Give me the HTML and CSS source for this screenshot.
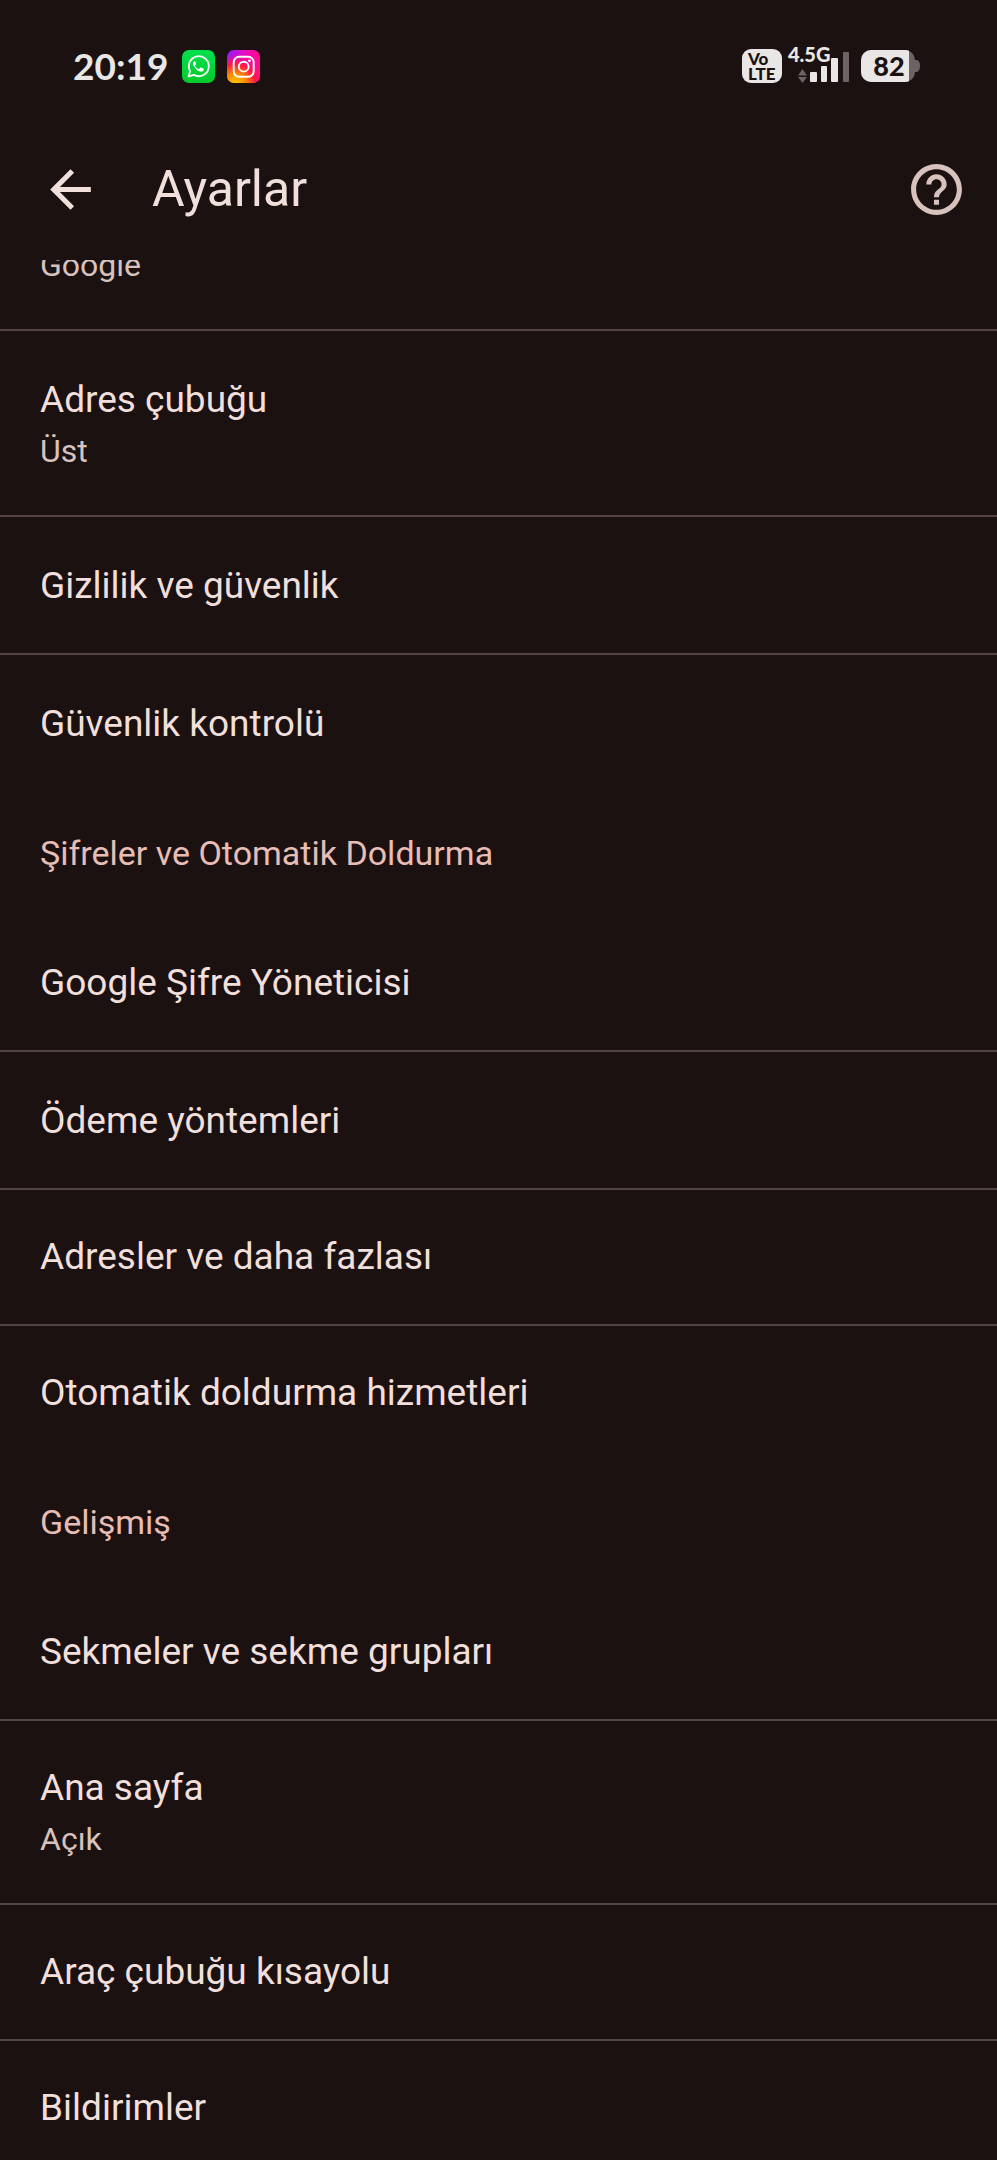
FILE: index.html
```html
<!DOCTYPE html>
<html lang="tr">
<head>
    <meta charset="utf-8">
    <meta name="viewport" content="width=device-width, initial-scale=1">
    <title>Ayarlar</title>
    <link rel="stylesheet" href="styles.css">
</head>
<body>
    <div class="status-bar">
        <span class="clock">20:19</span>
        <svg class="app-icon" viewBox="0 0 33 33" aria-hidden="true">
            <defs>
                <linearGradient id="wa" x1="0" y1="0" x2="0" y2="1">
                    <stop offset="0" stop-color="#02e04c"/>
                    <stop offset="1" stop-color="#02c92c"/>
                </linearGradient>
            </defs>
            <rect width="33" height="33" rx="7" fill="url(#wa)"/>
            <path d="M6.600 26.400l1.500-5.300a10 10 0 1 1 3.800 3.800z" fill="none" stroke="#fff" stroke-width="1.800" stroke-linejoin="round"/>
            <path d="M13.200 11.200c-.5-.2-1.300 0-1.700.7-.8 1.300-.5 3 .9 5 1.900 2.700 4 4.200 6.300 4.700 1.600.3 3.100-.7 3.200-2.200 0-.5-.2-.6-.6-.8l-2.200-1c-.4-.2-.7-.1-.9.2l-.9 1.100c-.2.3-.5.3-.8.1-1.500-.7-2.600-1.700-3.400-3.100-.2-.3-.1-.5.1-.7l.7-.9c.2-.2.2-.5.1-.8l-.8-2z" fill="#fff"/>
        </svg>
        <svg class="app-icon" viewBox="0 0 33 33" aria-hidden="true">
            <defs>
                <linearGradient id="ig" x1="0" y1="0" x2="1" y2="0">
                    <stop offset="0" stop-color="#8a1cff"/>
                    <stop offset=".5" stop-color="#e80cc4"/>
                    <stop offset="1" stop-color="#ff0a8c"/>
                </linearGradient>
                <radialGradient id="ig-warm" cx=".25" cy="1.05" r=".95">
                    <stop offset="0" stop-color="#ffd200"/>
                    <stop offset=".35" stop-color="#ff8a00"/>
                    <stop offset=".65" stop-color="#ff1a40"/>
                    <stop offset="1" stop-color="#ff0a8c" stop-opacity="0"/>
                </radialGradient>
            </defs>
            <rect width="33" height="33" rx="7" fill="url(#ig)"/>
            <rect width="33" height="33" rx="7" fill="url(#ig-warm)"/>
            <rect x="6.700" y="6.700" width="20" height="20" rx="5.500" fill="none" stroke="#fff" stroke-width="1.900"/>
            <circle cx="16.700" cy="16.700" r="4.900" fill="none" stroke="#fff" stroke-width="1.900"/>
            <circle cx="22.500" cy="10.800" r="1.400" fill="#fff"/>
        </svg>

        <div class="indicators">
            <div class="volte">Vo<br>LTE</div>
            <svg class="signal" viewBox="0 0 62 36" role="img" aria-label="4.5G">
                <g fill="#e9e6e6">
                    <text class="signal-label" x="0" y="14">4.5G</text>
                    <rect x="22" y="24" width="7" height="10" rx="1"/>
                    <rect x="33" y="18" width="6" height="16" rx="1"/>
                    <rect x="43" y="10" width="7" height="24" rx="1"/>
                </g>
                <g fill="#6e6265">
                    <rect x="55" y="4" width="6" height="30" rx="1"/>
                    <path d="M14.500 21l4.500 6.500h-9z"/>
                    <path d="M14.500 35l4.500-6h-9z"/>
                </g>
            </svg>
            <svg class="battery" viewBox="0 0 60 33" role="img" aria-label="82">
                <defs>
                    <clipPath id="charge"><rect width="48" height="33"/></clipPath>
                </defs>
                <rect width="54" height="32" rx="10" fill="#6e6265"/>
                <path d="M54 10h2q3 1 3 6t-3 6h-2z" fill="#6e6265"/>
                <rect width="54" height="32" rx="10" fill="#e9e6e6" clip-path="url(#charge)"/>
                <text class="battery-label" x="28" y="26">82</text>
            </svg>
        </div>
    </div>

    <header class="app-bar">
        <button class="icon-button" type="button" aria-label="Geri">
            <svg viewBox="0 0 24 24"><path d="M20 11H7.830l5.590-5.590L12 4l-8 8 8 8 1.410-1.410L7.830 13H20v-2z"/></svg>
        </button>
        <h1>Ayarlar</h1>
        <button class="icon-button help" type="button" aria-label="Yardım">
            <svg viewBox="0 0 24 24"><path d="M11 18h2v-2h-2v2zm1-16C6.480 2 2 6.480 2 12s4.480 10 10 10 10-4.480 10-10S17.520 2 12 2zm0 18c-4.410 0-8-3.590-8-8s3.590-8 8-8 8 3.590 8 8-3.590 8-8 8zm0-14c-2.210 0-4 1.790-4 4h2c0-1.100.9-2 2-2s2 .9 2 2c0 2-3 1.750-3 5h2c0-2.250 3-2.500 3-5 0-2.210-1.790-4-4-4z"/></svg>
        </button>
    </header>

    <main class="settings">
        <ul class="group roomy scrolled">
            <li><a href="#"><span class="summary">Google</span></a></li>
            <li><a href="#">Adres çubuğu<span class="summary">Üst</span></a></li>
            <li><a href="#">Gizlilik ve güvenlik</a></li>
            <li><a href="#">Güvenlik kontrolü</a></li>
        </ul>

        <h2>Şifreler ve Otomatik Doldurma</h2>
        <ul class="group">
            <li><a href="#">Google Şifre Yöneticisi</a></li>
            <li class="roomy"><a href="#">Ödeme yöntemleri</a></li>
            <li><a href="#">Adresler ve daha fazlası</a></li>
            <li><a href="#">Otomatik doldurma hizmetleri</a></li>
        </ul>

        <h2>Gelişmiş</h2>
        <ul class="group">
            <li><a href="#">Sekmeler ve sekme grupları</a></li>
            <li><a href="#">Ana sayfa<span class="summary">Açık</span></a></li>
            <li><a href="#">Araç çubuğu kısayolu</a></li>
            <li><a href="#">Bildirimler</a></li>
        </ul>
    </main>
</body>
</html>
```

FILE: styles.css
```css
* {
    box-sizing: border-box;
}

body {
    display: flex;
    flex-direction: column;
    height: 100vh;
    margin: 0;
    overflow: hidden;
    background: #1a1110;
    color: #f1dfdc;
    font-family: Roboto, "Liberation Sans", sans-serif;
}

/* status bar */

.status-bar {
    display: flex;
    flex-shrink: 0;
    align-items: center;
    gap: 12px;
    height: 120px;
    padding: 12px 76px 0 73px;
    color: #e9e6e6;
}

.clock {
    margin-right: 2px;
    font: 700 37px/40px Lato, sans-serif;
}

.app-icon {
    width: 33px;
    height: 33px;
}

.indicators {
    display: flex;
    align-items: center;
    gap: 6px;
    margin-left: auto;
}

.volte {
    width: 40px;
    height: 34px;
    padding: 2px 6px;
    border-radius: 9px;
    background: #e9e6e6;
    color: #1a1110;
    font: 900 17px/15px Lato, sans-serif;
}

.signal {
    width: 62px;
    height: 36px;
    overflow: visible;
}

.signal-label {
    font: 900 20px Lato, sans-serif;
}

.battery {
    width: 60px;
    height: 33px;
    margin-left: 5px;
}

.battery-label {
    fill: #1a1110;
    font: 900 27px Lato, sans-serif;
    text-anchor: middle;
}

/* app bar */

.app-bar {
    display: flex;
    flex-shrink: 0;
    align-items: center;
    height: 140px;
    padding: 0 30px 2px 40px;
}

.icon-button {
    width: 61px;
    height: 61px;
    padding: 0;
    border: 0;
    background: none;
    color: inherit;
}

.icon-button svg {
    display: block;
    fill: currentColor;
}

.help {
    margin-left: auto;
    color: #d8c2be;
}

h1 {
    margin: 0 0 0 51px;
    font-size: 50px;
    font-weight: 400;
    line-height: 60px;
}

/* settings list */

.settings {
    flex: 1;
    min-height: 0;
    overflow-y: auto;
    scrollbar-width: none;
}

.group {
    margin: 0;
    padding: 0;
    list-style: none;
}

.scrolled {
    margin-top: -67px;
}

.group a {
    display: block;
    padding: 43px 40px;
    color: inherit;
    font-size: 37px;
    line-height: 48px;
    text-decoration: none;
}

.group.roomy a,
.roomy a {
    padding-top: 45px;
}

.group li + li {
    border-top: 2px solid #534341;
}

.summary {
    display: block;
    margin-top: 6px;
    color: #d8c2be;
    font-size: 32px;
    line-height: 42px;
}

h2 {
    margin: 0;
    padding: 41px 40px 42px;
    color: #e7bdb6;
    font-size: 34px;
    font-weight: 400;
    line-height: 42px;
}
```
